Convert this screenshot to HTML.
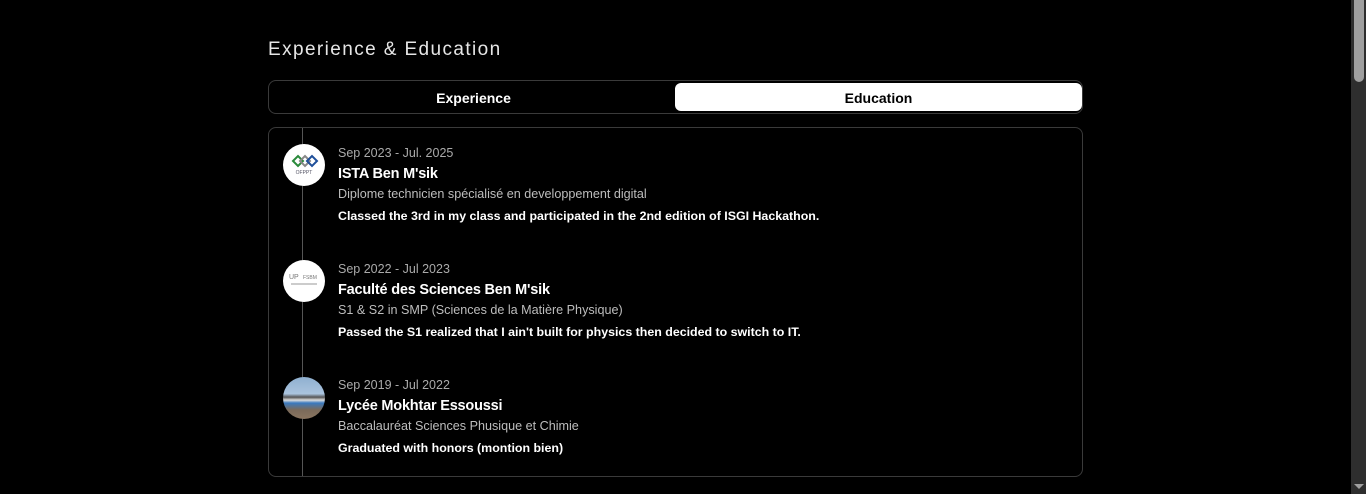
<!DOCTYPE html>
<html><head><meta charset="utf-8"><style>
*{margin:0;padding:0;box-sizing:border-box}
html,body{width:1366px;height:494px;overflow:hidden;background:#000;font-family:"Liberation Sans","DejaVu Sans",sans-serif;color:#fff}
.title{position:absolute;left:268px;top:39px;font-size:19px;letter-spacing:1.4px;color:#e6e6e6;font-weight:300}
.tabs{position:absolute;left:268px;top:80px;width:815px;height:34px;border:1px solid #3a3a3a;border-radius:8px}
.tab{position:absolute;top:2px;height:28px;width:407px;text-align:center;line-height:30px;font-size:14px;font-weight:bold}
.t1{left:1px;color:#fff}
.t2{left:406px;background:#fff;color:#000;border-radius:6px}
.card{position:absolute;left:268px;top:127px;width:815px;height:350px;border:1px solid #3a3a3a;border-radius:8px}
.line{position:absolute;left:302px;top:128px;width:1px;height:348px;background:#555}
.logo{position:absolute;left:283px;width:42px;height:42px;border-radius:50%;background:#fff;overflow:hidden}
.it{position:absolute;left:338px}
.d{font-size:12.5px;color:#aaa;height:18px}
.n{font-size:14.5px;font-weight:bold;color:#fff;height:21px;margin-top:2px;letter-spacing:-0.2px}
.s{font-size:12.6px;color:#bdbdbd;height:22px}
.b{font-size:12.4px;font-weight:bold;color:#fff}
.sb{position:absolute;left:1351px;top:0;width:15px;height:494px;background:#2e2e2e}
.th{position:absolute;left:1354px;top:0;width:10px;height:82px;background:#9f9f9f;border-radius:0 0 5px 5px}
</style></head><body>
<div class="title">Experience &amp; Education</div>
<div class="tabs"><div class="tab t1">Experience</div><div class="tab t2">Education</div></div>
<div class="card"></div>
<div class="line"></div>

<div class="logo" style="top:144px"><svg width="42" height="42"><g fill="none" stroke-width="2"><path d="M10 17l5-5 5 5-5 5z" stroke="#2a8a3a"/><path d="M17 17l5-5 5 5-5 5z" stroke="#888"/><path d="M24 17l5-5 5 5-5 5z" stroke="#1f4f9a"/></g><text x="21" y="30" font-size="5" fill="#556" text-anchor="middle" font-family="Liberation Sans">OFPPT</text></svg></div>
<div class="it" style="top:146px"><div class="d">Sep 2023 - Jul. 2025</div><div class="n">ISTA Ben M'sik</div><div class="s">Diplome technicien spécialisé en developpement digital</div><div class="b">Classed the 3rd in my class and participated in the 2nd edition of ISGI Hackathon.</div></div>

<div class="logo" style="top:260px"><svg width="42" height="42"><text x="6" y="19" font-size="7" fill="#777" font-family="Liberation Sans">UP</text><text x="20" y="19" font-size="5" fill="#777" font-family="Liberation Sans">FSBM</text><rect x="8" y="23" width="26" height="2" fill="#ccc"/></svg></div>
<div class="it" style="top:262px"><div class="d">Sep 2022 - Jul 2023</div><div class="n">Faculté des Sciences Ben M'sik</div><div class="s">S1 &amp; S2 in SMP (Sciences de la Matière Physique)</div><div class="b">Passed the S1 realized that I ain't built for physics then decided to switch to IT.</div></div>

<div class="logo" style="top:377px;background:linear-gradient(#8fb0d0 0%,#aac3dd 40%,#555 48%,#ddd 55%,#3a7ac0 62%,#7a6a5a 78%,#8a7560 100%)"></div>
<div class="it" style="top:378px"><div class="d">Sep 2019 - Jul 2022</div><div class="n">Lycée Mokhtar Essoussi</div><div class="s">Baccalauréat Sciences Phusique et Chimie</div><div class="b">Graduated with honors (montion bien)</div></div>

<div class="sb"></div><div class="th"></div>
<div style="position:absolute;left:1354px;top:484px;width:0;height:0;border-left:5px solid transparent;border-right:5px solid transparent;border-top:5px solid #9f9f9f"></div>
</body></html>
